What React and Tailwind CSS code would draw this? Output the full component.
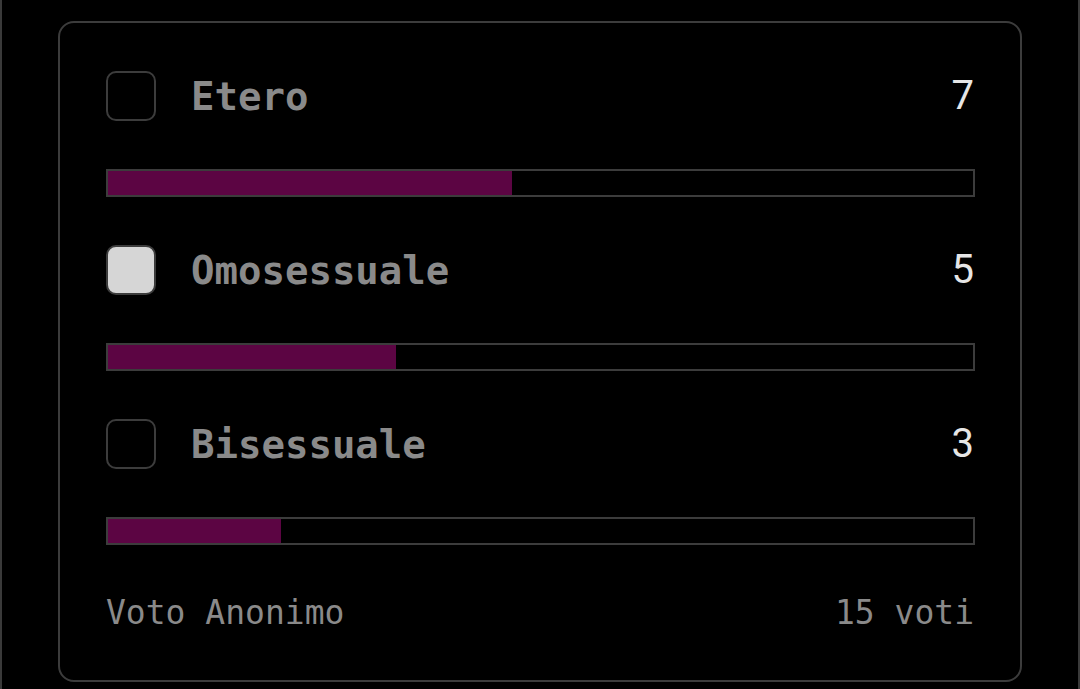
const options = [
  { id: 'etero', label: 'Etero', votes: 7, checked: false },
  { id: 'omo', label: 'Omosessuale', votes: 5, checked: true },
  { id: 'bi', label: 'Bisessuale', votes: 3, checked: false },
]

const total = options.reduce((sum, o) => sum + o.votes, 0)

function PollOption({ option, first }) {
  const pct = (option.votes / total) * 100
  return (
    <div className={first ? '' : 'mt-[48px]'}>
      {/* riga con checkbox, etichetta e conteggio */}
      <div className="flex items-center h-[50px]">
        <div
          className={`shrink-0 w-[50px] h-[50px] rounded-[10px] border-2 border-[#3c3c3c] ${
            option.checked ? 'bg-[#d6d6d6]' : 'bg-black'
          }`}
        />
        <span className="ml-[35px] text-[39px] leading-none font-bold text-[#8a8a8a] font-['DejaVu_Sans_Mono',monospace]">
          {option.label}
        </span>
        <span className="ml-auto text-[40px] leading-none font-normal text-[#e6e6e6] font-['Roboto',sans-serif]">
          {option.votes}
        </span>
      </div>

      {/* barra percentuale */}
      <div className="mt-[48px] -mr-[1px] h-[28px] border-2 border-[#3c3c3c]">
        <div className="h-full bg-[#5c0543]" style={{ width: `${pct}%` }} />
      </div>
    </div>
  )
}

export default function App() {
  return (
    <div className="w-[1080px] h-[689px] overflow-hidden bg-black border-x-2 border-[#3a3a3a] px-[56px] pt-[21px]">
      <div className="h-[661px] rounded-[16px] border-2 border-[#3c3c3c] px-[46px] pt-[48px]">
        {options.map((o, i) => (
          <PollOption key={o.id} option={o} first={i === 0} />
        ))}

        {/* footer */}
        <div className="mt-[51px] flex items-center justify-between text-[33px] leading-none text-[#8a8a8a] font-['DejaVu_Sans_Mono',monospace]">
          <span>Voto Anonimo</span>
          <span>15 voti</span>
        </div>
      </div>
    </div>
  )
}
